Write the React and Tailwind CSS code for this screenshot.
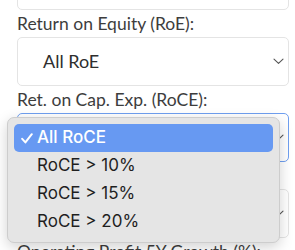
import React from "react";

function Chevron() {
  return (
    <svg width="11" height="7" viewBox="0 0 11 7" className="shrink-0">
      <path d="M1 1.2 L5.5 5.4 L10 1.2" fill="none" stroke="#555" strokeWidth="1.1" strokeLinecap="round" strokeLinejoin="round" />
    </svg>
  );
}

function Label({ children }) {
  return (
    <div className="pt-[3px] pb-[3px] text-[17.5px] leading-[21px] text-[#3d3d3d] whitespace-nowrap">{children}</div>
  );
}

function Field({ label, value, focused }) {
  return (
    <div>
      {label !== null && <Label>{label}</Label>}
      <div
        className={
          "h-[49px] rounded-[5px] border flex items-center justify-between pl-[25px] pr-[4px] bg-white " +
          (focused ? "border-[#6f9ff0]" : "border-[#e4e4e4]")
        }
      >
        <span className="text-[18px] text-[#2e2e2e]">{value}</span>
        <Chevron />
      </div>
    </div>
  );
}

const items = ["All RoCE", "RoCE > 10%", "RoCE > 15%", "RoCE > 20%"];

export default function App() {
  return (
    <div className="relative w-[295px] h-[250px] overflow-hidden bg-white font-['Lato',sans-serif]">
      <div className="pl-[17px] pr-[6px] mt-[-39px]">
        <Field label={null} value="" />
        <Field label="Return on Equity (RoE):" value="All RoE" />
        <Field label="Ret. on Cap. Exp. (RoCE):" value="All RoCE" focused />
        <Field label="Return on Assets (RoA):" value="All RoA" />
        <Label>Operating Profit 5Y Growth (%):</Label>
      </div>

      <div className="absolute left-[7px] top-[117px] w-[273px] rounded-[7px] border border-[#cdcdcd] bg-[#e5e5e5] p-[6px] shadow-[0_4px_14px_rgba(0,0,0,0.18)] font-['Inter',sans-serif]">
        {items.map((it, i) => (
          <div
            key={it}
            className={
              "relative h-[28px] flex items-center pl-[23px] rounded-[5px] text-[17px] " +
              (i === 0 ? "bg-[#6799f2] text-white font-medium" : "text-[#1f1f1f]")
            }
          >
            {i === 0 && (
              <svg width="12" height="11" viewBox="0 0 12 11" className="absolute left-[7px] top-[9px]">
                <path d="M1.2 5.8 L4.4 9.4 L10.8 1.2" fill="none" stroke="white" strokeWidth="2" strokeLinecap="round" strokeLinejoin="round" />
              </svg>
            )}
            {it}
          </div>
        ))}
      </div>
    </div>
  );
}
